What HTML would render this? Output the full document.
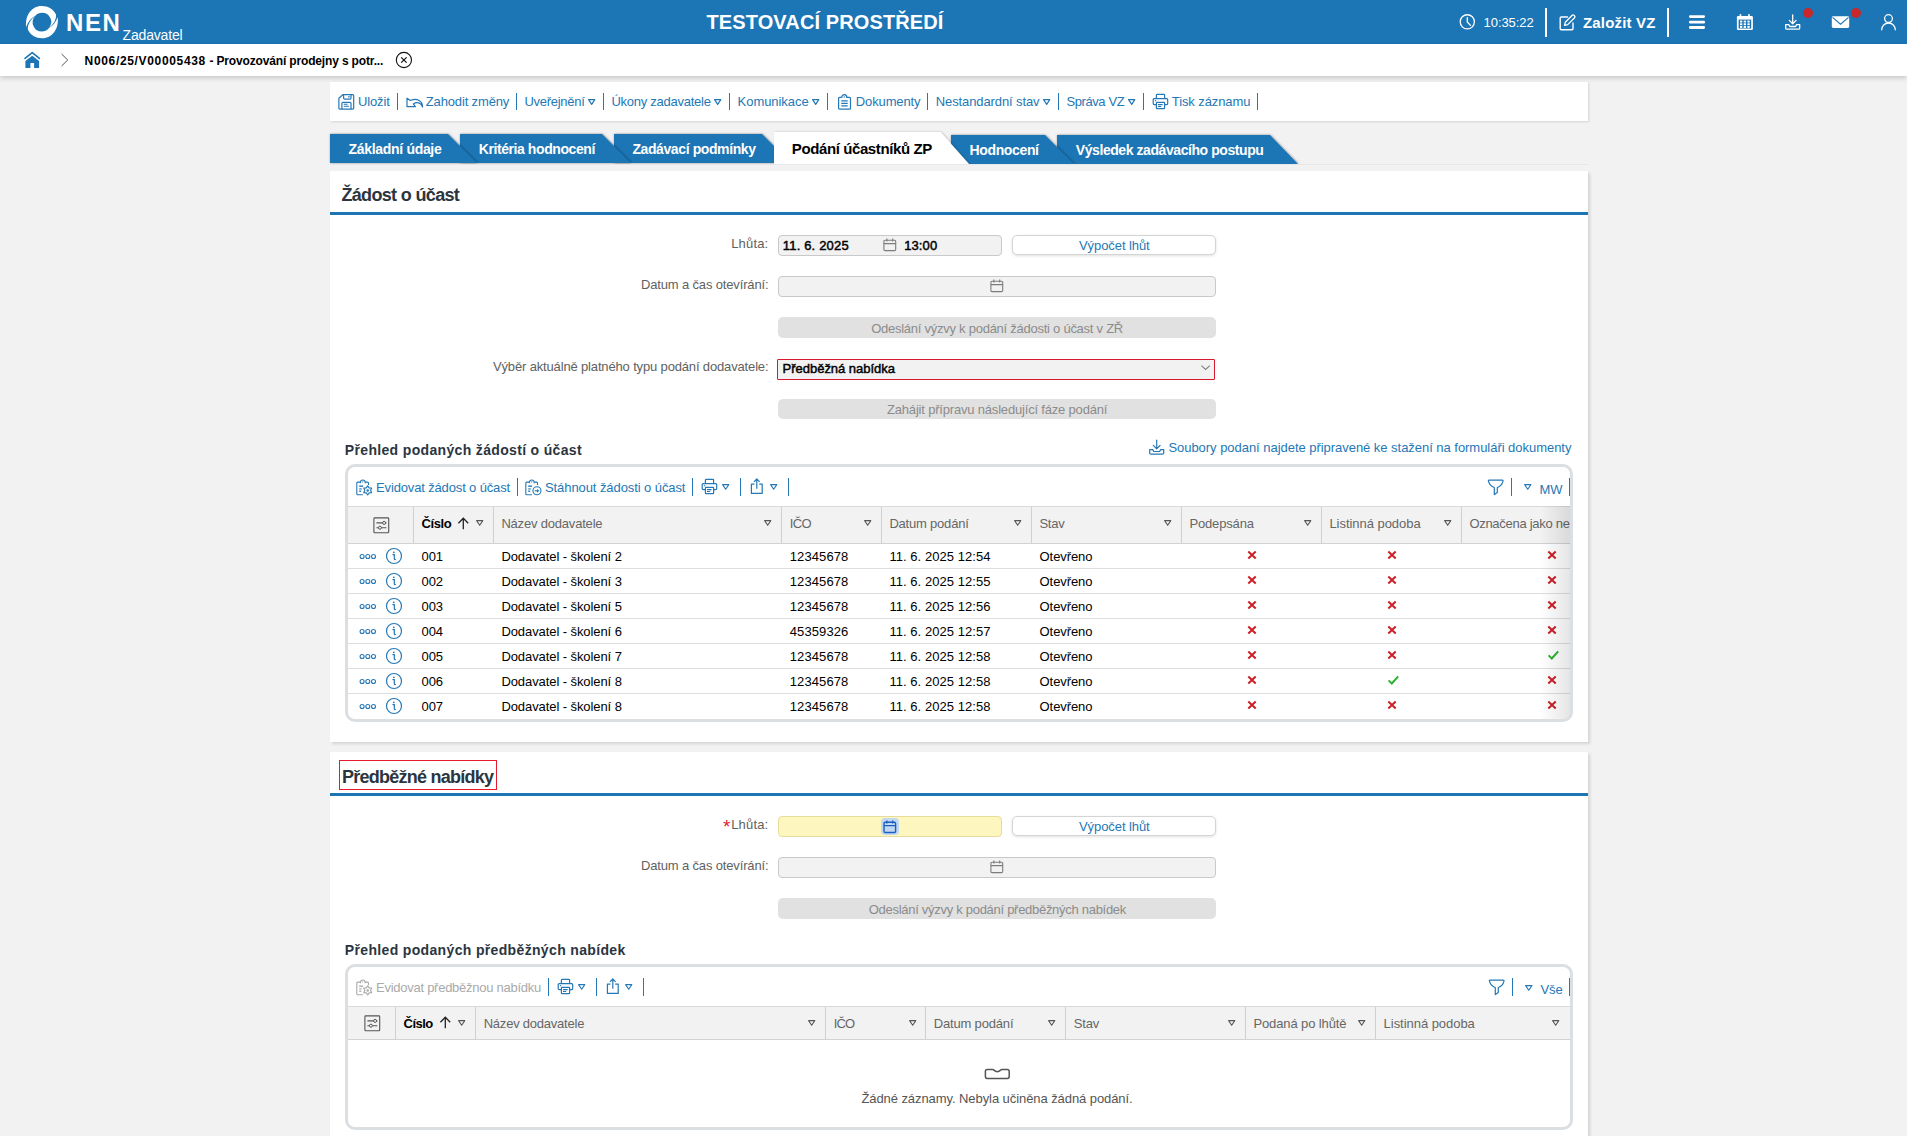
<!DOCTYPE html><html lang="cs"><head><meta charset="utf-8"><title>NEN</title><style>

*{box-sizing:border-box;margin:0;padding:0}
html,body{width:1907px;height:1136px;overflow:hidden;background:#f2f2f2;font-family:"Liberation Sans", sans-serif;}
.t{position:absolute;white-space:nowrap;line-height:1;}

</style></head><body>
<div style="position:absolute;left:0px;top:0px;width:1907px;height:44px;background:#1c75b4;"></div>
<div style="position:absolute;left:0px;top:44px;width:1907px;height:32px;background:#fff;box-shadow:0 2px 5px rgba(0,0,0,.18);"></div>
<svg style="position:absolute;left:25px;top:5px;overflow:visible;" width="34" height="34" viewBox="0 0 34 34" fill="none"><path d="M1.2 21.9 C-0.4 10 7.2 0.9 16.3 0.9 C23 0.8 28.6 4.3 31 9.4 C31.6 14 28.6 19.4 24.07 22.75 A9.1 9.1 0 0 0 17.1 7.8 A9.1 9.1 0 0 0 10.13 11.05 C6 13 3.2 17 1.2 21.9 Z" fill="#fff"/><path d="M1.2 21.9 C-0.4 10 7.2 0.9 16.3 0.9 C23 0.8 28.6 4.3 31 9.4 C31.6 14 28.6 19.4 24.07 22.75 A9.1 9.1 0 0 0 17.1 7.8 A9.1 9.1 0 0 0 10.13 11.05 C6 13 3.2 17 1.2 21.9 Z" fill="#fff" transform="rotate(180 16.95 17.1)"/></svg>
<div class="t" style="top:10.68px;font-size:24px;color:#fff;font-weight:700;letter-spacing:1.609px;left:66.00px;">NEN</div>
<div class="t" style="top:28.15px;font-size:14px;color:#fff;letter-spacing:-0.165px;left:122.50px;">Zadavatel</div>
<div class="t" style="top:12.37px;font-size:20px;color:#fff;font-weight:700;letter-spacing:0.113px;left:706.50px;">TESTOVACÍ PROSTŘEDÍ</div>
<div style="position:absolute;left:330px;top:82px;width:1258px;height:39px;background:#fff;box-shadow:1px 1px 2px rgba(0,0,0,.12);"></div>
<div style="position:absolute;left:330px;top:171px;width:1258px;height:571px;background:#fff;box-shadow:2px 2px 3px rgba(0,0,0,.13);"></div>
<div style="position:absolute;left:330px;top:752px;width:1258px;height:400px;background:#fff;box-shadow:2px 2px 3px rgba(0,0,0,.13);"></div>
<div style="position:absolute;left:330px;top:212px;width:1258px;height:3px;background:#1c75b4;"></div>
<div style="position:absolute;left:330px;top:793px;width:1258px;height:3px;background:#1c75b4;"></div>
<svg style="position:absolute;left:1459px;top:14px;overflow:visible;" width="16" height="16" viewBox="0 0 16 16" fill="none"><circle cx="8.3" cy="7.85" r="7.1" stroke="#fff" stroke-width="1.3"/><path d="M8.3 3.6V8l3.2 3.4" stroke="#fff" stroke-width="1.3" stroke-linecap="round" stroke-linejoin="round"/></svg>
<div class="t" style="top:15.80px;font-size:13px;color:#fff;letter-spacing:-0.076px;left:1483.60px;">10:35:22</div>
<div style="position:absolute;left:1545px;top:8px;width:2px;height:29px;background:#fff;"></div>
<svg style="position:absolute;left:1559px;top:14px;overflow:visible;" width="17" height="17" viewBox="0 0 17 17" fill="none"><path d="M8.5 3H2.2a1 1 0 0 0-1 1v10.8a1 1 0 0 0 1 1H13a1 1 0 0 0 1-1V9" stroke="#fff" stroke-width="1.4" stroke-linecap="round"/><path d="M6.3 8.3 13.2 1.3a1.2 1.2 0 0 1 1.7 0l.7.7a1.2 1.2 0 0 1 0 1.7L8.7 10.6 5.6 11.3Z" stroke="#fff" stroke-width="1.3" stroke-linejoin="round"/></svg>
<div class="t" style="top:14.70px;font-size:15px;color:#fff;font-weight:700;letter-spacing:0.166px;left:1583.00px;">Založit VZ</div>
<div style="position:absolute;left:1667px;top:8px;width:2px;height:29px;background:#fff;"></div>
<svg style="position:absolute;left:1688px;top:14px;" width="18" height="16" viewBox="0 0 18 16" fill="none"><path d="M2.3 2.6H15.7M2.3 8.2H15.7M2.3 13.5H15.7" stroke="#fff" stroke-width="2.8" stroke-linecap="round"/></svg>
<svg style="position:absolute;left:1736px;top:13px;" width="18" height="18" viewBox="0 0 18 18" fill="none"><rect x="0.9" y="3" width="16" height="14" rx="1.2" fill="#fff"/>
<rect x="3.6" y="0.9" width="1.7" height="4" rx=".8" fill="#fff"/><rect x="12.1" y="0.9" width="1.7" height="4" rx=".8" fill="#fff"/>
<rect x="2.6" y="6.6" width="12.6" height="8.9" fill="#1c75b4"/>
<g fill="#fff"><rect x="4" y="7.6" width="2.3" height="1.9"/><rect x="7.7" y="7.6" width="2.3" height="1.9"/><rect x="11.4" y="7.6" width="2.3" height="1.9"/>
<rect x="4" y="10.3" width="2.3" height="1.9"/><rect x="7.7" y="10.3" width="2.3" height="1.9"/><rect x="11.4" y="10.3" width="2.3" height="1.9"/>
<rect x="4" y="13" width="2.3" height="1.9"/><rect x="7.7" y="13" width="2.3" height="1.9"/><rect x="11.4" y="13" width="2.3" height="1.9"/></g></svg>
<svg style="position:absolute;left:1784px;top:13px;" width="18" height="18" viewBox="0 0 18 18" fill="none"><path d="M8.7 2V10.6M5.3 7.4l3.4 3.4 3.4-3.4" stroke="#fff" stroke-width="1.3" stroke-linecap="round" stroke-linejoin="round"/><path d="M1.7 11.6V15a1.2 1.2 0 0 0 1.2 1.2H14.5a1.2 1.2 0 0 0 1.2-1.2V11.6H12.6l-1 1.9H5.8l-1-1.9Z" stroke="#fff" stroke-width="1.3" stroke-linejoin="round"/></svg>
<div style="position:absolute;left:1803px;top:8px;width:10px;height:10px;background:#c9282d;border-radius:50%;"></div>
<svg style="position:absolute;left:1831px;top:16px;" width="19" height="13" viewBox="0 0 19 13" fill="none"><rect x="0.8" y="0.3" width="17.4" height="11.7" rx="1.4" fill="#fff"/><path d="M1.5 1.3 9.5 8.2 17.5 1.3" stroke="#1c75b4" stroke-width="1.1" fill="none"/></svg>
<div style="position:absolute;left:1851px;top:8px;width:10px;height:10px;background:#c9282d;border-radius:50%;"></div>
<svg style="position:absolute;left:1880px;top:13px;" width="17" height="18" viewBox="0 0 17 18" fill="none"><circle cx="8.5" cy="5.6" r="3.9" stroke="#fff" stroke-width="1.3"/><path d="M1.7 16.8a6.8 6.8 0 0 1 13.6 0" stroke="#fff" stroke-width="1.3" stroke-linecap="round"/></svg>
<svg style="position:absolute;left:23px;top:51px;" width="19" height="18" viewBox="0 0 19 18" fill="none"><path d="M2 7.4 9.2 1.6 16.4 7.4" stroke="#1c75b4" stroke-width="1.6" stroke-linecap="round" stroke-linejoin="round"/><path d="M9.2 4.7 2.4 10v6.4a.6.6 0 0 0 .6.6H7.4V11.9h3.7V17h4.4a.6.6 0 0 0 .6-.6V10Z" fill="#1c75b4"/></svg>
<svg style="position:absolute;left:60px;top:53px;" width="10" height="14" viewBox="0 0 10 14" fill="none"><path d="M1.6 1 7.7 7 1.6 13" stroke="#4a4a4a" stroke-width=".95" stroke-linejoin="miter"/></svg>
<div class="t" style="top:54.64px;font-size:12px;color:#000;font-weight:700;letter-spacing:0.658px;left:84.60px;">N006/25/V00005438</div>
<div class="t" style="top:54.64px;font-size:12px;color:#000;font-weight:700;letter-spacing:-0.153px;left:209.40px;">- Provozování prodejny s potr...</div>
<svg style="position:absolute;left:395px;top:51px;" width="18" height="18" viewBox="0 0 18 18" fill="none"><circle cx="8.9" cy="9" r="7.6" stroke="#111" stroke-width="1.1"/><path d="M6.2 6.3l5.4 5.4M11.6 6.3l-5.4 5.4" stroke="#111" stroke-width="1.2"/></svg>
<svg style="position:absolute;left:337.7px;top:93.4px;" width="17" height="17" viewBox="0 0 17 17" fill="none"><path d="M4.7 1.7H14.7a1 1 0 0 1 1 1V15.2a1 1 0 0 1-1 1H1.9a1 1 0 0 1-1-1V5.3Z" stroke="#2478b6" stroke-width="1.2" stroke-linejoin="round"/><path d="M5.6 1.7V5.1a1 1 0 0 0 1 1H12a1 1 0 0 0 1-1V1.7" stroke="#2478b6" stroke-width="1.2"/><path d="M10.9 3V4.5" stroke="#2478b6" stroke-width="1.3"/><path d="M3.9 16.2V10.3a1 1 0 0 1 1-1H12a1 1 0 0 1 1 1V16.2" stroke="#2478b6" stroke-width="1.2"/><path d="M5.8 11.2H9.6M5.8 13.2H11" stroke="#2478b6" stroke-width="1.1"/></svg>
<div class="t" style="top:94.60px;font-size:13px;color:#2478b6;letter-spacing:-0.169px;left:358.10px;">Uložit</div>
<div style="position:absolute;left:396.85px;top:93px;width:1.3px;height:17px;background:#2478b6;"></div>
<svg style="position:absolute;left:405.5px;top:96.9px;" width="18" height="12" viewBox="0 0 18 12" fill="none"><path d="M1 1.2V9.7H9.4L7.3 6.9C10.8 4.6 15 5.6 16.6 10C16.6 4 11 .6 4.4 3.5Z" stroke="#2478b6" stroke-width="1.2" stroke-linejoin="round"/></svg>
<div class="t" style="top:94.60px;font-size:13px;color:#2478b6;letter-spacing:-0.144px;left:425.80px;">Zahodit změny</div>
<div style="position:absolute;left:515.95px;top:93px;width:1.3px;height:17px;background:#2478b6;"></div>
<div class="t" style="top:94.60px;font-size:13px;color:#2478b6;letter-spacing:-0.267px;left:524.40px;">Uveřejnění</div>
<svg style="position:absolute;left:587px;top:97.9px;" width="9.4" height="8.2" viewBox="0 0 9.4 8.2" fill="none"><path d="M1.6 1.6H7.8L4.70 6.4Z" stroke="#2478b6" stroke-width="1.2" stroke-linejoin="round"/></svg>
<div style="position:absolute;left:603.15px;top:93px;width:1.3px;height:17px;background:#2478b6;"></div>
<div class="t" style="top:94.60px;font-size:13px;color:#2478b6;letter-spacing:-0.265px;left:611.50px;">Úkony zadavatele</div>
<svg style="position:absolute;left:713.2px;top:97.9px;" width="9.4" height="8.2" viewBox="0 0 9.4 8.2" fill="none"><path d="M1.6 1.6H7.8L4.70 6.4Z" stroke="#2478b6" stroke-width="1.2" stroke-linejoin="round"/></svg>
<div style="position:absolute;left:729.15px;top:93px;width:1.3px;height:17px;background:#2478b6;"></div>
<div class="t" style="top:94.60px;font-size:13px;color:#2478b6;letter-spacing:-0.055px;left:737.60px;">Komunikace</div>
<svg style="position:absolute;left:811.2px;top:97.9px;" width="9.4" height="8.2" viewBox="0 0 9.4 8.2" fill="none"><path d="M1.6 1.6H7.8L4.70 6.4Z" stroke="#2478b6" stroke-width="1.2" stroke-linejoin="round"/></svg>
<div style="position:absolute;left:826.95px;top:93px;width:1.3px;height:17px;background:#2478b6;"></div>
<svg style="position:absolute;left:837.2px;top:93.2px;" width="15" height="17" viewBox="0 0 15 17" fill="none"><path d="M4.7 4.4H2.6a1 1 0 0 0-1 1V15.2a1 1 0 0 0 1 1H12.5a1 1 0 0 0 1-1V5.4a1 1 0 0 0-1-1H9.9" stroke="#2478b6" stroke-width="1.2"/><path d="M4.7 5C4.7 3.3 5.7 1.7 7.3 1.7S9.9 3.3 9.9 5" stroke="#2478b6" stroke-width="1.2"/><circle cx="7.3" cy="3.9" r=".7" fill="#2478b6"/><path d="M4.3 7.9H10.7M4.3 10.3H10.7M4.3 12.8H10.7" stroke="#2478b6" stroke-width="1.3"/></svg>
<div class="t" style="top:94.60px;font-size:13px;color:#2478b6;letter-spacing:-0.128px;left:855.80px;">Dokumenty</div>
<div style="position:absolute;left:926.85px;top:93px;width:1.3px;height:17px;background:#2478b6;"></div>
<div class="t" style="top:94.60px;font-size:13px;color:#2478b6;letter-spacing:-0.113px;left:935.80px;">Nestandardní stav</div>
<svg style="position:absolute;left:1042.2px;top:97.9px;" width="9.4" height="8.2" viewBox="0 0 9.4 8.2" fill="none"><path d="M1.6 1.6H7.8L4.70 6.4Z" stroke="#2478b6" stroke-width="1.2" stroke-linejoin="round"/></svg>
<div style="position:absolute;left:1057.75px;top:93px;width:1.3px;height:17px;background:#2478b6;"></div>
<div class="t" style="top:94.60px;font-size:13px;color:#2478b6;letter-spacing:-0.402px;left:1066.40px;">Správa VZ</div>
<svg style="position:absolute;left:1127.2px;top:97.9px;" width="9.4" height="8.2" viewBox="0 0 9.4 8.2" fill="none"><path d="M1.6 1.6H7.8L4.70 6.4Z" stroke="#2478b6" stroke-width="1.2" stroke-linejoin="round"/></svg>
<div style="position:absolute;left:1142.75px;top:93px;width:1.3px;height:17px;background:#2478b6;"></div>
<svg style="position:absolute;left:1151.6px;top:93.4px;" width="17" height="17" viewBox="0 0 17 17" fill="none"><path d="M4.4 5.7V2.1a.7.7 0 0 1 .7-.7h6.8a.7.7 0 0 1 .7.7V5.7" stroke="#2478b6" stroke-width="1.2"/><path d="M4.4 11.6H2.2a1 1 0 0 1-1-1V6.7a1 1 0 0 1 1-1H14.7a1 1 0 0 1 1 1V10.6a1 1 0 0 1-1 1H12.6" stroke="#2478b6" stroke-width="1.2"/><rect x="4.4" y="9.4" width="8.2" height="6.3" rx=".6" stroke="#2478b6" stroke-width="1.2" fill="#fff"/><path d="M6 11.6H10.6M6 13.5H9.2" stroke="#2478b6" stroke-width="1.1"/><path d="M2.9 7.7H4.2" stroke="#2478b6" stroke-width="1.1"/></svg>
<div class="t" style="top:94.60px;font-size:13px;color:#2478b6;letter-spacing:-0.102px;left:1171.80px;">Tisk záznamu</div>
<div style="position:absolute;left:1256.85px;top:93px;width:1.3px;height:17px;background:#2478b6;"></div>
<div style="position:absolute;left:330px;top:164px;width:1258px;height:1px;background:#e7e7e7;"></div>
<svg style="position:absolute;left:320px;top:126px;" width="990" height="38" viewBox="0 0 990 38"><defs><filter id="tsh" x="-5%" y="-30%" width="110%" height="160%"><feDropShadow dx="0.5" dy="0" stdDeviation="1.2" flood-color="#000" flood-opacity=".45"/></filter><filter id="tsa" x="-5%" y="-30%" width="110%" height="160%"><feDropShadow dx="1" dy="0" stdDeviation="1.3" flood-color="#000" flood-opacity=".22"/></filter></defs><polygon points="737.0,9.0 950.0,9.0 978.0,38.0 737.0,38.0" fill="#1c75b4" filter="url(#tsh)"/><polygon points="631.0,9.0 725.0,9.0 754.0,38.0 631.0,38.0" fill="#1c75b4" filter="url(#tsh)"/><polygon points="294.0,8.0 442.0,8.0 471.0,37.0 294.0,37.0" fill="#1c75b4" filter="url(#tsh)"/><polygon points="140.0,8.0 282.0,8.0 311.0,37.0 140.0,37.0" fill="#1c75b4" filter="url(#tsh)"/><polygon points="10.0,8.0 128.0,8.0 157.0,37.0 10.0,37.0" fill="#1c75b4" filter="url(#tsh)"/><polygon points="454.0,6.0 620.5,6.0 649.0,38.0 454.0,38.0" fill="#fff" filter="url(#tsa)"/></svg>
<div class="t" style="top:142.15px;font-size:14px;color:#fff;font-weight:700;letter-spacing:-0.318px;left:348.60px;">Základní údaje</div>
<div class="t" style="top:142.15px;font-size:14px;color:#fff;font-weight:700;letter-spacing:-0.416px;left:478.70px;">Kritéria hodnocení</div>
<div class="t" style="top:142.15px;font-size:14px;color:#fff;font-weight:700;letter-spacing:-0.396px;left:632.40px;">Zadávací podmínky</div>
<div class="t" style="top:141.30px;font-size:15px;color:#000;font-weight:700;letter-spacing:-0.396px;left:791.80px;">Podání účastníků ZP</div>
<div class="t" style="top:143.15px;font-size:14px;color:#fff;font-weight:700;letter-spacing:-0.372px;left:969.60px;">Hodnocení</div>
<div class="t" style="top:143.15px;font-size:14px;color:#fff;font-weight:700;letter-spacing:-0.429px;left:1075.80px;">Výsledek zadávacího postupu</div>
<div class="t" style="top:186.46px;font-size:18px;color:#2b3540;font-weight:700;letter-spacing:-0.659px;left:341.40px;">Žádost o účast</div>
<div class="t" style="top:237.00px;font-size:13px;color:#616161;letter-spacing:0.174px;right:1138.60px;">Lhůta:</div>
<div style="position:absolute;left:778px;top:235px;width:224px;height:21px;background:#f2f2f2;border:1px solid #c9c9c9;border-radius:4px;"></div>
<div class="t" style="top:238.90px;font-size:13px;color:#000;letter-spacing:0.173px;left:782.80px;-webkit-text-stroke:0.45px #000;">11. 6. 2025</div>
<svg style="position:absolute;left:883px;top:238.4px;" width="14" height="14" viewBox="0 0 14 14" fill="none"><rect x=".9" y="2.2" width="11.8" height="10.4" rx="1.1" stroke="#7c7c7c" stroke-width="1.1"/><path d="M.9 5.6H12.7M3.9 .6V3.4M9.7 .6V3.4" stroke="#7c7c7c" stroke-width="1.1"/></svg>
<div class="t" style="top:238.90px;font-size:13px;color:#000;letter-spacing:0.111px;left:904.20px;-webkit-text-stroke:0.45px #000;">13:00</div>
<div style="position:absolute;left:1012px;top:235px;width:204px;height:20px;background:#fff;border:1px solid #d4d4d4;border-radius:5px;box-shadow:0 1px 3px rgba(0,0,0,.12);"></div>
<div class="t" style="top:238.50px;font-size:13px;color:#2478b6;letter-spacing:-0.079px;left:1079.00px;">Výpočet lhůt</div>
<div class="t" style="top:278.00px;font-size:13px;color:#616161;letter-spacing:-0.154px;right:1138.60px;">Datum a čas otevírání:</div>
<div style="position:absolute;left:778px;top:276px;width:438px;height:21px;background:#f2f2f2;border:1px solid #c9c9c9;border-radius:4px;"></div>
<svg style="position:absolute;left:990.2px;top:279.2px;" width="14" height="14" viewBox="0 0 14 14" fill="none"><rect x=".9" y="2.2" width="11.8" height="10.4" rx="1.1" stroke="#7c7c7c" stroke-width="1.1"/><path d="M.9 5.6H12.7M3.9 .6V3.4M9.7 .6V3.4" stroke="#7c7c7c" stroke-width="1.1"/></svg>
<div style="position:absolute;left:778px;top:317px;width:438px;height:21px;background:#e1e1e1;border-radius:5px;"></div>
<div class="t" style="top:322.00px;font-size:13px;color:#8b8b8b;letter-spacing:-0.255px;left:871.20px;">Odeslání výzvy k podání žádosti o účast v ZŘ</div>
<div class="t" style="top:359.70px;font-size:13px;color:#616161;letter-spacing:-0.153px;right:1138.60px;">Výběr aktuálně platného typu podání dodavatele:</div>
<div style="position:absolute;left:777px;top:359px;width:438px;height:21px;background:#f2f2f2;border:1.5px solid #d8192d;border-radius:1px;"></div>
<div class="t" style="top:362.00px;font-size:13px;color:#000;letter-spacing:-0.022px;left:782.60px;-webkit-text-stroke:0.45px #000;">Předběžná nabídka</div>
<svg style="position:absolute;left:1200px;top:363px;" width="12" height="9" viewBox="0 0 12 9" fill="none"><path d="M1.4 2.6 5.6 6.4 9.8 2.6" stroke="#808080" stroke-width="1.1"/></svg>
<div style="position:absolute;left:778px;top:399px;width:438px;height:20px;background:#e1e1e1;border-radius:5px;"></div>
<div class="t" style="top:403.00px;font-size:13px;color:#8b8b8b;letter-spacing:-0.186px;left:887.00px;">Zahájit přípravu následující fáze podání</div>
<div class="t" style="top:443.35px;font-size:14px;color:#2b3540;font-weight:700;letter-spacing:0.338px;left:344.80px;">Přehled podaných žádostí o účast</div>
<svg style="position:absolute;left:1148px;top:438px;" width="18" height="18" viewBox="0 0 18 18" fill="none"><path d="M8.7 2V10.6M5.3 7.4l3.4 3.4 3.4-3.4" stroke="#2478b6" stroke-width="1.2" stroke-linecap="round" stroke-linejoin="round"/><path d="M1.7 11.6V15a1.2 1.2 0 0 0 1.2 1.2H14.5a1.2 1.2 0 0 0 1.2-1.2V11.6H12.6l-1 1.9H5.8l-1-1.9Z" stroke="#2478b6" stroke-width="1.2" stroke-linejoin="round"/></svg>
<div class="t" style="top:440.80px;font-size:13px;color:#2478b6;letter-spacing:-0.036px;left:1168.40px;">Soubory podaní najdete připravené ke stažení na formuláři dokumenty</div>
<div style="position:absolute;left:345px;top:464px;width:1228px;height:258px;border:3px solid #dcdfe2;border-radius:10px;background:#fff;"></div>
<svg style="position:absolute;left:355.85px;top:478.6px;" width="17" height="17" viewBox="0 0 17 17" fill="none"><path d="M4.4 3.15H1.8a1 1 0 0 0-1 1V14.7a1 1 0 0 0 1 1H6.9" stroke="#2478b6" stroke-width="1.1"/><path d="M9.2 3.15H11.5a1 1 0 0 1 1 1V5.9" stroke="#2478b6" stroke-width="1.1"/><path d="M4.4 4.3V3.6C4.4 2 5.3 .95 6.8 .95S9.2 2 9.2 3.6V4.3" stroke="#2478b6" stroke-width="1.1"/><circle cx="6.7" cy="2.9" r=".6" fill="#2478b6"/><path d="M3.2 7.15H7.1" stroke="#2478b6" stroke-width="1.4"/><path d="M3.2 9.9H5.8" stroke="#2478b6" stroke-width="1.1"/><path d="M3.2 12.2H5.2" stroke="#2478b6" stroke-width="1.4"/><path d="M11.70 6.80L13.15 8.89L15.68 9.10L14.60 11.40L15.68 13.70L13.15 13.91L11.70 16.00L10.25 13.91L7.72 13.70L8.80 11.40L7.72 9.10L10.25 8.89Z" stroke="#2478b6" stroke-width="1.15" stroke-linejoin="round"/><circle cx="11.7" cy="11.4" r="1.25" fill="#2478b6"/></svg>
<div class="t" style="top:481.00px;font-size:13px;color:#2478b6;letter-spacing:-0.144px;left:376.00px;">Evidovat žádost o účast</div>
<div style="position:absolute;left:516.75px;top:478px;width:1.3px;height:18px;background:#2478b6;"></div>
<svg style="position:absolute;left:525.45px;top:478.6px;" width="17" height="17" viewBox="0 0 17 17" fill="none"><path d="M4.4 3.15H1.8a1 1 0 0 0-1 1V14.7a1 1 0 0 0 1 1H6.9" stroke="#2478b6" stroke-width="1.1"/><path d="M9.2 3.15H11.5a1 1 0 0 1 1 1V5.9" stroke="#2478b6" stroke-width="1.1"/><path d="M4.4 4.3V3.6C4.4 2 5.3 .95 6.8 .95S9.2 2 9.2 3.6V4.3" stroke="#2478b6" stroke-width="1.1"/><circle cx="6.7" cy="2.9" r=".6" fill="#2478b6"/><path d="M3.2 7.15H7.1" stroke="#2478b6" stroke-width="1.4"/><path d="M3.2 9.9H5.8" stroke="#2478b6" stroke-width="1.1"/><path d="M3.2 12.2H5.2" stroke="#2478b6" stroke-width="1.4"/><circle cx="11.95" cy="11.8" r="4" stroke="#2478b6" stroke-width="1.1"/><path d="M9.7 11.8H12.4" stroke="#2478b6" stroke-width="1.1"/><path d="M12 9.9 14.3 11.8 12 13.7Z" fill="#2478b6"/></svg>
<div class="t" style="top:481.00px;font-size:13px;color:#2478b6;letter-spacing:-0.082px;left:545.00px;">Stáhnout žádosti o účast</div>
<div style="position:absolute;left:691.85px;top:478px;width:1.3px;height:18px;background:#2478b6;"></div>
<svg style="position:absolute;left:700.8px;top:478.4px;" width="17" height="17" viewBox="0 0 17 17" fill="none"><path d="M4.4 5.7V2.1a.7.7 0 0 1 .7-.7h6.8a.7.7 0 0 1 .7.7V5.7" stroke="#2478b6" stroke-width="1.2"/><path d="M4.4 11.6H2.2a1 1 0 0 1-1-1V6.7a1 1 0 0 1 1-1H14.7a1 1 0 0 1 1 1V10.6a1 1 0 0 1-1 1H12.6" stroke="#2478b6" stroke-width="1.2"/><rect x="4.4" y="9.4" width="8.2" height="6.3" rx=".6" stroke="#2478b6" stroke-width="1.2" fill="#fff"/><path d="M6 11.6H10.6M6 13.5H9.2" stroke="#2478b6" stroke-width="1.1"/><path d="M2.9 7.7H4.2" stroke="#2478b6" stroke-width="1.1"/></svg>
<svg style="position:absolute;left:720.8px;top:483px;" width="9.4" height="8.0" viewBox="0 0 9.4 8.0" fill="none"><path d="M1.6 1.6H7.8L4.70 6.2Z" stroke="#2478b6" stroke-width="1.1" stroke-linejoin="round"/></svg>
<div style="position:absolute;left:739.75px;top:478px;width:1.3px;height:18px;background:#2478b6;"></div>
<svg style="position:absolute;left:750.4px;top:478.2px;" width="14" height="17" viewBox="0 0 14 17" fill="none"><path d="M4.4 6.2H1.4V15.4H12.2V6.2H9.2" stroke="#2478b6" stroke-width="1.2" stroke-linejoin="round"/><path d="M6.8 10.8V1.2M4 3.8 6.8 1 9.6 3.8" stroke="#2478b6" stroke-width="1.2" stroke-linejoin="round"/></svg>
<svg style="position:absolute;left:768.8px;top:483px;" width="9.4" height="8.0" viewBox="0 0 9.4 8.0" fill="none"><path d="M1.6 1.6H7.8L4.70 6.2Z" stroke="#2478b6" stroke-width="1.1" stroke-linejoin="round"/></svg>
<div style="position:absolute;left:787.95px;top:478px;width:1.3px;height:18px;background:#2478b6;"></div>
<svg style="position:absolute;left:1487.4px;top:478.6px;" width="18" height="17" viewBox="0 0 18 17" fill="none"><path d="M2 1.1H15.3a.7.7 0 0 1 .7 1C15.2 5.4 12.6 7.6 10.3 8.5V13.6L7.3 15.6V8.5C5 7.6 2.4 5.4 1.4 2.1A.7.7 0 0 1 2 1.1Z" stroke="#2478b6" stroke-width="1.2" stroke-linejoin="round"/></svg>
<div style="position:absolute;left:1510.95px;top:478px;width:1.3px;height:18px;background:#2478b6;"></div>
<svg style="position:absolute;left:1523.0px;top:483.4px;" width="9.5" height="8.0" viewBox="0 0 9.5 8.0" fill="none"><path d="M1.6 1.6H7.9L4.75 6.2Z" stroke="#2478b6" stroke-width="1.1" stroke-linejoin="round"/></svg>
<div class="t" style="top:482.60px;font-size:13px;color:#2478b6;letter-spacing:-0.055px;left:1539.40px;">MW</div>
<div style="position:absolute;left:1568.6px;top:478px;width:1.6px;height:18px;background:#2478b6;"></div>
<div style="position:absolute;left:348px;top:506px;width:1222px;height:38px;background:#f2f2f2;border-top:1px solid #d9d9d9;border-bottom:1px solid #d2d2d2;"></div>
<div style="position:absolute;left:412.5px;top:507px;width:1px;height:36px;background:#d0d0d0;"></div>
<div style="position:absolute;left:492.5px;top:507px;width:1px;height:36px;background:#d0d0d0;"></div>
<div style="position:absolute;left:780.5px;top:507px;width:1px;height:36px;background:#d0d0d0;"></div>
<div style="position:absolute;left:880.5px;top:507px;width:1px;height:36px;background:#d0d0d0;"></div>
<div style="position:absolute;left:1030.5px;top:507px;width:1px;height:36px;background:#d0d0d0;"></div>
<div style="position:absolute;left:1180.5px;top:507px;width:1px;height:36px;background:#d0d0d0;"></div>
<div style="position:absolute;left:1320.5px;top:507px;width:1px;height:36px;background:#d0d0d0;"></div>
<div style="position:absolute;left:1460.5px;top:507px;width:1px;height:36px;background:#d0d0d0;"></div>
<svg style="position:absolute;left:372.6px;top:516.6px;" width="17" height="17" viewBox="0 0 17 17" fill="none"><rect x=".9" y=".9" width="14.8" height="14.8" rx=".8" stroke="#555" stroke-width="1.1"/><path d="M3.4 5.9H9.6M12.6 5.9H13.4M3.4 10.7H5.4M8.4 10.7H13.4" stroke="#555" stroke-width="1.1"/><circle cx="11.1" cy="5.9" r="1.5" stroke="#555" stroke-width="1"/><circle cx="6.9" cy="10.7" r="1.5" stroke="#555" stroke-width="1"/></svg>
<div class="t" style="top:516.80px;font-size:13px;color:#000;font-weight:700;letter-spacing:-0.439px;left:421.60px;">Číslo</div>
<svg style="position:absolute;left:456.6px;top:516.6px;" width="13" height="13" viewBox="0 0 13 13" fill="none"><path d="M6.3 12.2V1.4M1.4 6.2 6.3 1.2 11.2 6.2" stroke="#222" stroke-width="1.3"/></svg>
<svg style="position:absolute;left:475.2px;top:519.3px;" width="9.4" height="8.0" viewBox="0 0 9.4 8.0" fill="none"><path d="M1.6 1.6H7.8L4.70 6.2Z" stroke="#555" stroke-width="1.05" stroke-linejoin="round"/></svg>
<div class="t" style="top:516.80px;font-size:13px;color:#666;letter-spacing:-0.192px;left:501.40px;">Název dodavatele</div>
<svg style="position:absolute;left:763px;top:519.3px;" width="9.4" height="8.0" viewBox="0 0 9.4 8.0" fill="none"><path d="M1.6 1.6H7.8L4.70 6.2Z" stroke="#555" stroke-width="1.05" stroke-linejoin="round"/></svg>
<div class="t" style="top:516.80px;font-size:13px;color:#666;letter-spacing:-0.642px;left:789.80px;">IČO</div>
<svg style="position:absolute;left:863px;top:519.3px;" width="9.4" height="8.0" viewBox="0 0 9.4 8.0" fill="none"><path d="M1.6 1.6H7.8L4.70 6.2Z" stroke="#555" stroke-width="1.05" stroke-linejoin="round"/></svg>
<div class="t" style="top:516.80px;font-size:13px;color:#666;letter-spacing:-0.206px;left:889.40px;">Datum podání</div>
<svg style="position:absolute;left:1013px;top:519.3px;" width="9.4" height="8.0" viewBox="0 0 9.4 8.0" fill="none"><path d="M1.6 1.6H7.8L4.70 6.2Z" stroke="#555" stroke-width="1.05" stroke-linejoin="round"/></svg>
<div class="t" style="top:516.80px;font-size:13px;color:#666;letter-spacing:-0.204px;left:1039.40px;">Stav</div>
<svg style="position:absolute;left:1163px;top:519.3px;" width="9.4" height="8.0" viewBox="0 0 9.4 8.0" fill="none"><path d="M1.6 1.6H7.8L4.70 6.2Z" stroke="#555" stroke-width="1.05" stroke-linejoin="round"/></svg>
<div class="t" style="top:516.80px;font-size:13px;color:#666;letter-spacing:-0.153px;left:1189.40px;">Podepsána</div>
<svg style="position:absolute;left:1303px;top:519.3px;" width="9.4" height="8.0" viewBox="0 0 9.4 8.0" fill="none"><path d="M1.6 1.6H7.8L4.70 6.2Z" stroke="#555" stroke-width="1.05" stroke-linejoin="round"/></svg>
<div class="t" style="top:516.80px;font-size:13px;color:#666;letter-spacing:-0.041px;left:1329.40px;">Listinná podoba</div>
<svg style="position:absolute;left:1443px;top:519.3px;" width="9.4" height="8.0" viewBox="0 0 9.4 8.0" fill="none"><path d="M1.6 1.6H7.8L4.70 6.2Z" stroke="#555" stroke-width="1.05" stroke-linejoin="round"/></svg>
<div class="t" style="top:516.80px;font-size:13px;color:#666;letter-spacing:-0.287px;left:1469.40px;">Označena jako ne</div>
<svg style="position:absolute;left:359px;top:552.5999999999999px;" width="19" height="7" viewBox="0 0 19 7" fill="none"><circle cx="3.1" cy="3.5" r="2" stroke="#2478b6" stroke-width="1.1"/><circle cx="8.8" cy="3.5" r="2" stroke="#2478b6" stroke-width="1.1"/><circle cx="14.5" cy="3.5" r="2" stroke="#2478b6" stroke-width="1.1"/></svg>
<svg style="position:absolute;left:385px;top:546.9px;" width="18" height="18" viewBox="0 0 18 18" fill="none"><circle cx="9" cy="9" r="7.5" stroke="#2478b6" stroke-width="1.2"/><circle cx="8.8" cy="5.3" r=".9" fill="#2478b6"/><path d="M7.9 7.6H9.3V11.6C9.3 12.4 9.7 12.7 10.4 12.5" stroke="#2478b6" stroke-width="1.2" stroke-linecap="round"/></svg>
<div class="t" style="top:549.80px;font-size:13px;color:#000;letter-spacing:-0.168px;left:421.60px;">001</div>
<div class="t" style="top:549.80px;font-size:13px;color:#000;letter-spacing:-0.082px;left:501.40px;">Dodavatel - školení 2</div>
<div class="t" style="top:549.80px;font-size:13px;color:#000;letter-spacing:0.095px;left:789.80px;">12345678</div>
<div class="t" style="top:549.80px;font-size:13px;color:#000;letter-spacing:0.056px;left:889.40px;">11. 6. 2025 12:54</div>
<div class="t" style="top:549.80px;font-size:13px;color:#000;letter-spacing:-0.086px;left:1039.60px;">Otevřeno</div>
<svg style="position:absolute;left:1246.3px;top:549.1999999999999px;" width="12" height="12" viewBox="0 0 12 12" fill="none"><path d="M2.3 2.5 9.7 9.5M9.7 2.5 2.3 9.5" stroke="#cc1f26" stroke-width="2"/></svg>
<svg style="position:absolute;left:1386.3px;top:549.1999999999999px;" width="12" height="12" viewBox="0 0 12 12" fill="none"><path d="M2.3 2.5 9.7 9.5M9.7 2.5 2.3 9.5" stroke="#cc1f26" stroke-width="2"/></svg>
<svg style="position:absolute;left:1546.3px;top:549.1999999999999px;" width="12" height="12" viewBox="0 0 12 12" fill="none"><path d="M2.3 2.5 9.7 9.5M9.7 2.5 2.3 9.5" stroke="#cc1f26" stroke-width="2"/></svg>
<div style="position:absolute;left:348px;top:568px;width:1222px;height:1px;background:#dedede;"></div>
<svg style="position:absolute;left:359px;top:577.5999999999999px;" width="19" height="7" viewBox="0 0 19 7" fill="none"><circle cx="3.1" cy="3.5" r="2" stroke="#2478b6" stroke-width="1.1"/><circle cx="8.8" cy="3.5" r="2" stroke="#2478b6" stroke-width="1.1"/><circle cx="14.5" cy="3.5" r="2" stroke="#2478b6" stroke-width="1.1"/></svg>
<svg style="position:absolute;left:385px;top:571.9px;" width="18" height="18" viewBox="0 0 18 18" fill="none"><circle cx="9" cy="9" r="7.5" stroke="#2478b6" stroke-width="1.2"/><circle cx="8.8" cy="5.3" r=".9" fill="#2478b6"/><path d="M7.9 7.6H9.3V11.6C9.3 12.4 9.7 12.7 10.4 12.5" stroke="#2478b6" stroke-width="1.2" stroke-linecap="round"/></svg>
<div class="t" style="top:574.80px;font-size:13px;color:#000;letter-spacing:-0.168px;left:421.60px;">002</div>
<div class="t" style="top:574.80px;font-size:13px;color:#000;letter-spacing:-0.082px;left:501.40px;">Dodavatel - školení 3</div>
<div class="t" style="top:574.80px;font-size:13px;color:#000;letter-spacing:0.095px;left:789.80px;">12345678</div>
<div class="t" style="top:574.80px;font-size:13px;color:#000;letter-spacing:0.056px;left:889.40px;">11. 6. 2025 12:55</div>
<div class="t" style="top:574.80px;font-size:13px;color:#000;letter-spacing:-0.086px;left:1039.60px;">Otevřeno</div>
<svg style="position:absolute;left:1246.3px;top:574.1999999999999px;" width="12" height="12" viewBox="0 0 12 12" fill="none"><path d="M2.3 2.5 9.7 9.5M9.7 2.5 2.3 9.5" stroke="#cc1f26" stroke-width="2"/></svg>
<svg style="position:absolute;left:1386.3px;top:574.1999999999999px;" width="12" height="12" viewBox="0 0 12 12" fill="none"><path d="M2.3 2.5 9.7 9.5M9.7 2.5 2.3 9.5" stroke="#cc1f26" stroke-width="2"/></svg>
<svg style="position:absolute;left:1546.3px;top:574.1999999999999px;" width="12" height="12" viewBox="0 0 12 12" fill="none"><path d="M2.3 2.5 9.7 9.5M9.7 2.5 2.3 9.5" stroke="#cc1f26" stroke-width="2"/></svg>
<div style="position:absolute;left:348px;top:593px;width:1222px;height:1px;background:#dedede;"></div>
<svg style="position:absolute;left:359px;top:602.5999999999999px;" width="19" height="7" viewBox="0 0 19 7" fill="none"><circle cx="3.1" cy="3.5" r="2" stroke="#2478b6" stroke-width="1.1"/><circle cx="8.8" cy="3.5" r="2" stroke="#2478b6" stroke-width="1.1"/><circle cx="14.5" cy="3.5" r="2" stroke="#2478b6" stroke-width="1.1"/></svg>
<svg style="position:absolute;left:385px;top:596.9px;" width="18" height="18" viewBox="0 0 18 18" fill="none"><circle cx="9" cy="9" r="7.5" stroke="#2478b6" stroke-width="1.2"/><circle cx="8.8" cy="5.3" r=".9" fill="#2478b6"/><path d="M7.9 7.6H9.3V11.6C9.3 12.4 9.7 12.7 10.4 12.5" stroke="#2478b6" stroke-width="1.2" stroke-linecap="round"/></svg>
<div class="t" style="top:599.80px;font-size:13px;color:#000;letter-spacing:-0.168px;left:421.60px;">003</div>
<div class="t" style="top:599.80px;font-size:13px;color:#000;letter-spacing:-0.082px;left:501.40px;">Dodavatel - školení 5</div>
<div class="t" style="top:599.80px;font-size:13px;color:#000;letter-spacing:0.095px;left:789.80px;">12345678</div>
<div class="t" style="top:599.80px;font-size:13px;color:#000;letter-spacing:0.056px;left:889.40px;">11. 6. 2025 12:56</div>
<div class="t" style="top:599.80px;font-size:13px;color:#000;letter-spacing:-0.086px;left:1039.60px;">Otevřeno</div>
<svg style="position:absolute;left:1246.3px;top:599.1999999999999px;" width="12" height="12" viewBox="0 0 12 12" fill="none"><path d="M2.3 2.5 9.7 9.5M9.7 2.5 2.3 9.5" stroke="#cc1f26" stroke-width="2"/></svg>
<svg style="position:absolute;left:1386.3px;top:599.1999999999999px;" width="12" height="12" viewBox="0 0 12 12" fill="none"><path d="M2.3 2.5 9.7 9.5M9.7 2.5 2.3 9.5" stroke="#cc1f26" stroke-width="2"/></svg>
<svg style="position:absolute;left:1546.3px;top:599.1999999999999px;" width="12" height="12" viewBox="0 0 12 12" fill="none"><path d="M2.3 2.5 9.7 9.5M9.7 2.5 2.3 9.5" stroke="#cc1f26" stroke-width="2"/></svg>
<div style="position:absolute;left:348px;top:618px;width:1222px;height:1px;background:#dedede;"></div>
<svg style="position:absolute;left:359px;top:627.5999999999999px;" width="19" height="7" viewBox="0 0 19 7" fill="none"><circle cx="3.1" cy="3.5" r="2" stroke="#2478b6" stroke-width="1.1"/><circle cx="8.8" cy="3.5" r="2" stroke="#2478b6" stroke-width="1.1"/><circle cx="14.5" cy="3.5" r="2" stroke="#2478b6" stroke-width="1.1"/></svg>
<svg style="position:absolute;left:385px;top:621.9px;" width="18" height="18" viewBox="0 0 18 18" fill="none"><circle cx="9" cy="9" r="7.5" stroke="#2478b6" stroke-width="1.2"/><circle cx="8.8" cy="5.3" r=".9" fill="#2478b6"/><path d="M7.9 7.6H9.3V11.6C9.3 12.4 9.7 12.7 10.4 12.5" stroke="#2478b6" stroke-width="1.2" stroke-linecap="round"/></svg>
<div class="t" style="top:624.80px;font-size:13px;color:#000;letter-spacing:-0.168px;left:421.60px;">004</div>
<div class="t" style="top:624.80px;font-size:13px;color:#000;letter-spacing:-0.082px;left:501.40px;">Dodavatel - školení 6</div>
<div class="t" style="top:624.80px;font-size:13px;color:#000;letter-spacing:0.095px;left:789.80px;">45359326</div>
<div class="t" style="top:624.80px;font-size:13px;color:#000;letter-spacing:0.056px;left:889.40px;">11. 6. 2025 12:57</div>
<div class="t" style="top:624.80px;font-size:13px;color:#000;letter-spacing:-0.086px;left:1039.60px;">Otevřeno</div>
<svg style="position:absolute;left:1246.3px;top:624.1999999999999px;" width="12" height="12" viewBox="0 0 12 12" fill="none"><path d="M2.3 2.5 9.7 9.5M9.7 2.5 2.3 9.5" stroke="#cc1f26" stroke-width="2"/></svg>
<svg style="position:absolute;left:1386.3px;top:624.1999999999999px;" width="12" height="12" viewBox="0 0 12 12" fill="none"><path d="M2.3 2.5 9.7 9.5M9.7 2.5 2.3 9.5" stroke="#cc1f26" stroke-width="2"/></svg>
<svg style="position:absolute;left:1546.3px;top:624.1999999999999px;" width="12" height="12" viewBox="0 0 12 12" fill="none"><path d="M2.3 2.5 9.7 9.5M9.7 2.5 2.3 9.5" stroke="#cc1f26" stroke-width="2"/></svg>
<div style="position:absolute;left:348px;top:643px;width:1222px;height:1px;background:#dedede;"></div>
<svg style="position:absolute;left:359px;top:652.5999999999999px;" width="19" height="7" viewBox="0 0 19 7" fill="none"><circle cx="3.1" cy="3.5" r="2" stroke="#2478b6" stroke-width="1.1"/><circle cx="8.8" cy="3.5" r="2" stroke="#2478b6" stroke-width="1.1"/><circle cx="14.5" cy="3.5" r="2" stroke="#2478b6" stroke-width="1.1"/></svg>
<svg style="position:absolute;left:385px;top:646.9px;" width="18" height="18" viewBox="0 0 18 18" fill="none"><circle cx="9" cy="9" r="7.5" stroke="#2478b6" stroke-width="1.2"/><circle cx="8.8" cy="5.3" r=".9" fill="#2478b6"/><path d="M7.9 7.6H9.3V11.6C9.3 12.4 9.7 12.7 10.4 12.5" stroke="#2478b6" stroke-width="1.2" stroke-linecap="round"/></svg>
<div class="t" style="top:649.80px;font-size:13px;color:#000;letter-spacing:-0.168px;left:421.60px;">005</div>
<div class="t" style="top:649.80px;font-size:13px;color:#000;letter-spacing:-0.082px;left:501.40px;">Dodavatel - školení 7</div>
<div class="t" style="top:649.80px;font-size:13px;color:#000;letter-spacing:0.095px;left:789.80px;">12345678</div>
<div class="t" style="top:649.80px;font-size:13px;color:#000;letter-spacing:0.056px;left:889.40px;">11. 6. 2025 12:58</div>
<div class="t" style="top:649.80px;font-size:13px;color:#000;letter-spacing:-0.086px;left:1039.60px;">Otevřeno</div>
<svg style="position:absolute;left:1246.3px;top:649.1999999999999px;" width="12" height="12" viewBox="0 0 12 12" fill="none"><path d="M2.3 2.5 9.7 9.5M9.7 2.5 2.3 9.5" stroke="#cc1f26" stroke-width="2"/></svg>
<svg style="position:absolute;left:1386.3px;top:649.1999999999999px;" width="12" height="12" viewBox="0 0 12 12" fill="none"><path d="M2.3 2.5 9.7 9.5M9.7 2.5 2.3 9.5" stroke="#cc1f26" stroke-width="2"/></svg>
<svg style="position:absolute;left:1545.8999999999999px;top:649.1999999999999px;" width="14" height="12" viewBox="0 0 14 12" fill="none"><path d="M2.6 6.4 5.8 9.5 12.2 2.4" stroke="#2bb32b" stroke-width="2"/></svg>
<div style="position:absolute;left:348px;top:668px;width:1222px;height:1px;background:#dedede;"></div>
<svg style="position:absolute;left:359px;top:677.5999999999999px;" width="19" height="7" viewBox="0 0 19 7" fill="none"><circle cx="3.1" cy="3.5" r="2" stroke="#2478b6" stroke-width="1.1"/><circle cx="8.8" cy="3.5" r="2" stroke="#2478b6" stroke-width="1.1"/><circle cx="14.5" cy="3.5" r="2" stroke="#2478b6" stroke-width="1.1"/></svg>
<svg style="position:absolute;left:385px;top:671.9px;" width="18" height="18" viewBox="0 0 18 18" fill="none"><circle cx="9" cy="9" r="7.5" stroke="#2478b6" stroke-width="1.2"/><circle cx="8.8" cy="5.3" r=".9" fill="#2478b6"/><path d="M7.9 7.6H9.3V11.6C9.3 12.4 9.7 12.7 10.4 12.5" stroke="#2478b6" stroke-width="1.2" stroke-linecap="round"/></svg>
<div class="t" style="top:674.80px;font-size:13px;color:#000;letter-spacing:-0.168px;left:421.60px;">006</div>
<div class="t" style="top:674.80px;font-size:13px;color:#000;letter-spacing:-0.082px;left:501.40px;">Dodavatel - školení 8</div>
<div class="t" style="top:674.80px;font-size:13px;color:#000;letter-spacing:0.095px;left:789.80px;">12345678</div>
<div class="t" style="top:674.80px;font-size:13px;color:#000;letter-spacing:0.056px;left:889.40px;">11. 6. 2025 12:58</div>
<div class="t" style="top:674.80px;font-size:13px;color:#000;letter-spacing:-0.086px;left:1039.60px;">Otevřeno</div>
<svg style="position:absolute;left:1246.3px;top:674.1999999999999px;" width="12" height="12" viewBox="0 0 12 12" fill="none"><path d="M2.3 2.5 9.7 9.5M9.7 2.5 2.3 9.5" stroke="#cc1f26" stroke-width="2"/></svg>
<svg style="position:absolute;left:1385.8999999999999px;top:674.1999999999999px;" width="14" height="12" viewBox="0 0 14 12" fill="none"><path d="M2.6 6.4 5.8 9.5 12.2 2.4" stroke="#2bb32b" stroke-width="2"/></svg>
<svg style="position:absolute;left:1546.3px;top:674.1999999999999px;" width="12" height="12" viewBox="0 0 12 12" fill="none"><path d="M2.3 2.5 9.7 9.5M9.7 2.5 2.3 9.5" stroke="#cc1f26" stroke-width="2"/></svg>
<div style="position:absolute;left:348px;top:693px;width:1222px;height:1px;background:#dedede;"></div>
<svg style="position:absolute;left:359px;top:702.5999999999999px;" width="19" height="7" viewBox="0 0 19 7" fill="none"><circle cx="3.1" cy="3.5" r="2" stroke="#2478b6" stroke-width="1.1"/><circle cx="8.8" cy="3.5" r="2" stroke="#2478b6" stroke-width="1.1"/><circle cx="14.5" cy="3.5" r="2" stroke="#2478b6" stroke-width="1.1"/></svg>
<svg style="position:absolute;left:385px;top:696.9px;" width="18" height="18" viewBox="0 0 18 18" fill="none"><circle cx="9" cy="9" r="7.5" stroke="#2478b6" stroke-width="1.2"/><circle cx="8.8" cy="5.3" r=".9" fill="#2478b6"/><path d="M7.9 7.6H9.3V11.6C9.3 12.4 9.7 12.7 10.4 12.5" stroke="#2478b6" stroke-width="1.2" stroke-linecap="round"/></svg>
<div class="t" style="top:699.80px;font-size:13px;color:#000;letter-spacing:-0.168px;left:421.60px;">007</div>
<div class="t" style="top:699.80px;font-size:13px;color:#000;letter-spacing:-0.082px;left:501.40px;">Dodavatel - školení 8</div>
<div class="t" style="top:699.80px;font-size:13px;color:#000;letter-spacing:0.095px;left:789.80px;">12345678</div>
<div class="t" style="top:699.80px;font-size:13px;color:#000;letter-spacing:0.056px;left:889.40px;">11. 6. 2025 12:58</div>
<div class="t" style="top:699.80px;font-size:13px;color:#000;letter-spacing:-0.086px;left:1039.60px;">Otevřeno</div>
<svg style="position:absolute;left:1246.3px;top:699.1999999999999px;" width="12" height="12" viewBox="0 0 12 12" fill="none"><path d="M2.3 2.5 9.7 9.5M9.7 2.5 2.3 9.5" stroke="#cc1f26" stroke-width="2"/></svg>
<svg style="position:absolute;left:1386.3px;top:699.1999999999999px;" width="12" height="12" viewBox="0 0 12 12" fill="none"><path d="M2.3 2.5 9.7 9.5M9.7 2.5 2.3 9.5" stroke="#cc1f26" stroke-width="2"/></svg>
<svg style="position:absolute;left:1546.3px;top:699.1999999999999px;" width="12" height="12" viewBox="0 0 12 12" fill="none"><path d="M2.3 2.5 9.7 9.5M9.7 2.5 2.3 9.5" stroke="#cc1f26" stroke-width="2"/></svg>
<div style="position:absolute;left:1540px;top:506px;width:30px;height:213px;background:linear-gradient(to right, rgba(0,0,0,0), rgba(0,0,0,.10));border-bottom-right-radius:7px;"></div>
<div style="position:absolute;left:339px;top:760px;width:158px;height:30px;border:1px solid #e8192c;"></div>
<div class="t" style="top:767.66px;font-size:18px;color:#2b3540;font-weight:700;letter-spacing:-0.745px;left:342.00px;">Předběžné nabídky</div>
<div class="t" style="top:816.62px;font-size:19px;color:#d9232e;left:723.00px;">*</div>
<div class="t" style="top:817.70px;font-size:13px;color:#616161;letter-spacing:0.174px;right:1138.60px;">Lhůta:</div>
<div style="position:absolute;left:778px;top:816px;width:224px;height:21px;background:#fdf6bf;border:1px solid #e6dd9c;border-radius:4px;"></div>
<div style="position:absolute;left:881px;top:818px;width:18px;height:17px;background:#c3d7f1;border-radius:4px;"></div>
<svg style="position:absolute;left:883.4px;top:819.6px;" width="14" height="14" viewBox="0 0 14 14" fill="none"><rect x="1" y="2.3" width="11.6" height="10.2" rx="1.2" stroke="#1b5fc0" stroke-width="1.4"/><path d="M1 5.6H12.6M3.9 .6V3.4M9.7 .6V3.4" stroke="#1b5fc0" stroke-width="1.4"/></svg>
<div style="position:absolute;left:1012px;top:816px;width:204px;height:20px;background:#fff;border:1px solid #d4d4d4;border-radius:5px;box-shadow:0 1px 3px rgba(0,0,0,.12);"></div>
<div class="t" style="top:819.50px;font-size:13px;color:#2478b6;letter-spacing:-0.079px;left:1079.00px;">Výpočet lhůt</div>
<div class="t" style="top:858.80px;font-size:13px;color:#616161;letter-spacing:-0.154px;right:1138.60px;">Datum a čas otevírání:</div>
<div style="position:absolute;left:778px;top:857px;width:438px;height:21px;background:#f2f2f2;border:1px solid #c9c9c9;border-radius:4px;"></div>
<svg style="position:absolute;left:990.4px;top:860.1px;" width="14" height="14" viewBox="0 0 14 14" fill="none"><rect x=".9" y="2.2" width="11.8" height="10.4" rx="1.1" stroke="#7c7c7c" stroke-width="1.1"/><path d="M.9 5.6H12.7M3.9 .6V3.4M9.7 .6V3.4" stroke="#7c7c7c" stroke-width="1.1"/></svg>
<div style="position:absolute;left:778px;top:898px;width:438px;height:21px;background:#e1e1e1;border-radius:5px;"></div>
<div class="t" style="top:902.60px;font-size:13px;color:#8b8b8b;letter-spacing:-0.287px;left:868.80px;">Odeslání výzvy k podání předběžných nabídek</div>
<div class="t" style="top:943.35px;font-size:14px;color:#2b3540;font-weight:700;letter-spacing:0.344px;left:344.80px;">Přehled podaných předběžných nabídek</div>
<div style="position:absolute;left:345px;top:964px;width:1228px;height:166px;border:3px solid #dcdfe2;border-radius:10px;background:#fff;"></div>
<svg style="position:absolute;left:355.85px;top:978.7px;" width="17" height="17" viewBox="0 0 17 17" fill="none"><path d="M4.4 3.15H1.8a1 1 0 0 0-1 1V14.7a1 1 0 0 0 1 1H6.9" stroke="#aaa" stroke-width="1.1"/><path d="M9.2 3.15H11.5a1 1 0 0 1 1 1V5.9" stroke="#aaa" stroke-width="1.1"/><path d="M4.4 4.3V3.6C4.4 2 5.3 .95 6.8 .95S9.2 2 9.2 3.6V4.3" stroke="#aaa" stroke-width="1.1"/><circle cx="6.7" cy="2.9" r=".6" fill="#aaa"/><path d="M3.2 7.15H7.1" stroke="#aaa" stroke-width="1.4"/><path d="M3.2 9.9H5.8" stroke="#aaa" stroke-width="1.1"/><path d="M3.2 12.2H5.2" stroke="#aaa" stroke-width="1.4"/><path d="M11.70 6.80L13.15 8.89L15.68 9.10L14.60 11.40L15.68 13.70L13.15 13.91L11.70 16.00L10.25 13.91L7.72 13.70L8.80 11.40L7.72 9.10L10.25 8.89Z" stroke="#aaa" stroke-width="1.15" stroke-linejoin="round"/><circle cx="11.7" cy="11.4" r="1.25" fill="#aaa"/></svg>
<div class="t" style="top:981.10px;font-size:13px;color:#aaa;letter-spacing:-0.260px;left:376.00px;">Evidovat předběžnou nabídku</div>
<div style="position:absolute;left:547.95px;top:978px;width:1.3px;height:18px;background:#2478b6;"></div>
<svg style="position:absolute;left:556.8px;top:978.4px;" width="17" height="17" viewBox="0 0 17 17" fill="none"><path d="M4.4 5.7V2.1a.7.7 0 0 1 .7-.7h6.8a.7.7 0 0 1 .7.7V5.7" stroke="#2478b6" stroke-width="1.2"/><path d="M4.4 11.6H2.2a1 1 0 0 1-1-1V6.7a1 1 0 0 1 1-1H14.7a1 1 0 0 1 1 1V10.6a1 1 0 0 1-1 1H12.6" stroke="#2478b6" stroke-width="1.2"/><rect x="4.4" y="9.4" width="8.2" height="6.3" rx=".6" stroke="#2478b6" stroke-width="1.2" fill="#fff"/><path d="M6 11.6H10.6M6 13.5H9.2" stroke="#2478b6" stroke-width="1.1"/><path d="M2.9 7.7H4.2" stroke="#2478b6" stroke-width="1.1"/></svg>
<svg style="position:absolute;left:576.6px;top:983px;" width="9.4" height="8.0" viewBox="0 0 9.4 8.0" fill="none"><path d="M1.6 1.6H7.8L4.70 6.2Z" stroke="#2478b6" stroke-width="1.1" stroke-linejoin="round"/></svg>
<div style="position:absolute;left:595.75px;top:978px;width:1.3px;height:18px;background:#2478b6;"></div>
<svg style="position:absolute;left:606.2px;top:978.2px;" width="14" height="17" viewBox="0 0 14 17" fill="none"><path d="M4.4 6.2H1.4V15.4H12.2V6.2H9.2" stroke="#2478b6" stroke-width="1.2" stroke-linejoin="round"/><path d="M6.8 10.8V1.2M4 3.8 6.8 1 9.6 3.8" stroke="#2478b6" stroke-width="1.2" stroke-linejoin="round"/></svg>
<svg style="position:absolute;left:624.4px;top:983px;" width="9.4" height="8.0" viewBox="0 0 9.4 8.0" fill="none"><path d="M1.6 1.6H7.8L4.70 6.2Z" stroke="#2478b6" stroke-width="1.1" stroke-linejoin="round"/></svg>
<div style="position:absolute;left:642.75px;top:978px;width:1.3px;height:18px;background:#2478b6;"></div>
<svg style="position:absolute;left:1488.4px;top:978.6px;" width="18" height="17" viewBox="0 0 18 17" fill="none"><path d="M2 1.1H15.3a.7.7 0 0 1 .7 1C15.2 5.4 12.6 7.6 10.3 8.5V13.6L7.3 15.6V8.5C5 7.6 2.4 5.4 1.4 2.1A.7.7 0 0 1 2 1.1Z" stroke="#2478b6" stroke-width="1.2" stroke-linejoin="round"/></svg>
<div style="position:absolute;left:1512.15px;top:978px;width:1.3px;height:18px;background:#2478b6;"></div>
<svg style="position:absolute;left:1524.3px;top:983.5px;" width="9.5" height="8.0" viewBox="0 0 9.5 8.0" fill="none"><path d="M1.6 1.6H7.9L4.75 6.2Z" stroke="#2478b6" stroke-width="1.1" stroke-linejoin="round"/></svg>
<div class="t" style="top:982.80px;font-size:13px;color:#2478b6;letter-spacing:-0.069px;left:1540.40px;">Vše</div>
<div style="position:absolute;left:1568.8px;top:978px;width:1.6px;height:18px;background:#2478b6;"></div>
<div style="position:absolute;left:348px;top:1006px;width:1222px;height:34px;background:#f2f2f2;border-top:1px solid #d9d9d9;border-bottom:1px solid #d2d2d2;"></div>
<div style="position:absolute;left:395.0px;top:1007px;width:1px;height:32px;background:#d0d0d0;"></div>
<div style="position:absolute;left:475.0px;top:1007px;width:1px;height:32px;background:#d0d0d0;"></div>
<div style="position:absolute;left:825.0px;top:1007px;width:1px;height:32px;background:#d0d0d0;"></div>
<div style="position:absolute;left:925.0px;top:1007px;width:1px;height:32px;background:#d0d0d0;"></div>
<div style="position:absolute;left:1065.0px;top:1007px;width:1px;height:32px;background:#d0d0d0;"></div>
<div style="position:absolute;left:1245.0px;top:1007px;width:1px;height:32px;background:#d0d0d0;"></div>
<div style="position:absolute;left:1375.0px;top:1007px;width:1px;height:32px;background:#d0d0d0;"></div>
<svg style="position:absolute;left:363.6px;top:1014.6px;" width="17" height="17" viewBox="0 0 17 17" fill="none"><rect x=".9" y=".9" width="14.8" height="14.8" rx=".8" stroke="#555" stroke-width="1.1"/><path d="M3.4 5.9H9.6M12.6 5.9H13.4M3.4 10.7H5.4M8.4 10.7H13.4" stroke="#555" stroke-width="1.1"/><circle cx="11.1" cy="5.9" r="1.5" stroke="#555" stroke-width="1"/><circle cx="6.9" cy="10.7" r="1.5" stroke="#555" stroke-width="1"/></svg>
<div class="t" style="top:1016.60px;font-size:13px;color:#000;font-weight:700;letter-spacing:-0.519px;left:403.60px;">Číslo</div>
<svg style="position:absolute;left:438.6px;top:1016.2px;" width="13" height="13" viewBox="0 0 13 13" fill="none"><path d="M6.3 12.2V1.4M1.4 6.2 6.3 1.2 11.2 6.2" stroke="#222" stroke-width="1.3"/></svg>
<svg style="position:absolute;left:457.4px;top:1019.3px;" width="9.4" height="8.0" viewBox="0 0 9.4 8.0" fill="none"><path d="M1.6 1.6H7.8L4.70 6.2Z" stroke="#555" stroke-width="1.05" stroke-linejoin="round"/></svg>
<div class="t" style="top:1016.60px;font-size:13px;color:#666;letter-spacing:-0.224px;left:483.70px;">Název dodavatele</div>
<svg style="position:absolute;left:807.4px;top:1019.3px;" width="9.4" height="8.0" viewBox="0 0 9.4 8.0" fill="none"><path d="M1.6 1.6H7.8L4.70 6.2Z" stroke="#555" stroke-width="1.05" stroke-linejoin="round"/></svg>
<div class="t" style="top:1016.60px;font-size:13px;color:#666;letter-spacing:-0.842px;left:833.80px;">IČO</div>
<svg style="position:absolute;left:907.6px;top:1019.3px;" width="9.4" height="8.0" viewBox="0 0 9.4 8.0" fill="none"><path d="M1.6 1.6H7.8L4.70 6.2Z" stroke="#555" stroke-width="1.05" stroke-linejoin="round"/></svg>
<div class="t" style="top:1016.60px;font-size:13px;color:#666;letter-spacing:-0.164px;left:933.70px;">Datum podání</div>
<svg style="position:absolute;left:1047.4px;top:1019.3px;" width="9.4" height="8.0" viewBox="0 0 9.4 8.0" fill="none"><path d="M1.6 1.6H7.8L4.70 6.2Z" stroke="#555" stroke-width="1.05" stroke-linejoin="round"/></svg>
<div class="t" style="top:1016.60px;font-size:13px;color:#666;letter-spacing:-0.204px;left:1073.80px;">Stav</div>
<svg style="position:absolute;left:1227.4px;top:1019.3px;" width="9.4" height="8.0" viewBox="0 0 9.4 8.0" fill="none"><path d="M1.6 1.6H7.8L4.70 6.2Z" stroke="#555" stroke-width="1.05" stroke-linejoin="round"/></svg>
<div class="t" style="top:1016.60px;font-size:13px;color:#666;letter-spacing:-0.114px;left:1253.40px;">Podaná po lhůtě</div>
<svg style="position:absolute;left:1357.4px;top:1019.3px;" width="9.4" height="8.0" viewBox="0 0 9.4 8.0" fill="none"><path d="M1.6 1.6H7.8L4.70 6.2Z" stroke="#555" stroke-width="1.05" stroke-linejoin="round"/></svg>
<div class="t" style="top:1016.60px;font-size:13px;color:#666;letter-spacing:-0.041px;left:1383.60px;">Listinná podoba</div>
<svg style="position:absolute;left:1551.4px;top:1019.3px;" width="9.4" height="8.0" viewBox="0 0 9.4 8.0" fill="none"><path d="M1.6 1.6H7.8L4.70 6.2Z" stroke="#555" stroke-width="1.05" stroke-linejoin="round"/></svg>
<svg style="position:absolute;left:983.6px;top:1068px;" width="28" height="12" viewBox="0 0 28 12" fill="none"><path d="M3.2 1.4H8.8C9.8 1.4 10.6 3.7 13.3 3.7C16 3.7 16.8 1.4 17.8 1.4H23.4A1.8 1.8 0 0 1 25.2 3.2V8.6A1.8 1.8 0 0 1 23.4 10.4H3.2A1.8 1.8 0 0 1 1.4 8.6V3.2A1.8 1.8 0 0 1 3.2 1.4Z" stroke="#555" stroke-width="1.5"/></svg>
<div class="t" style="top:1092.00px;font-size:13px;color:#555;letter-spacing:-0.074px;left:861.40px;">Žádné záznamy. Nebyla učiněna žádná podání.</div>
</body></html>
